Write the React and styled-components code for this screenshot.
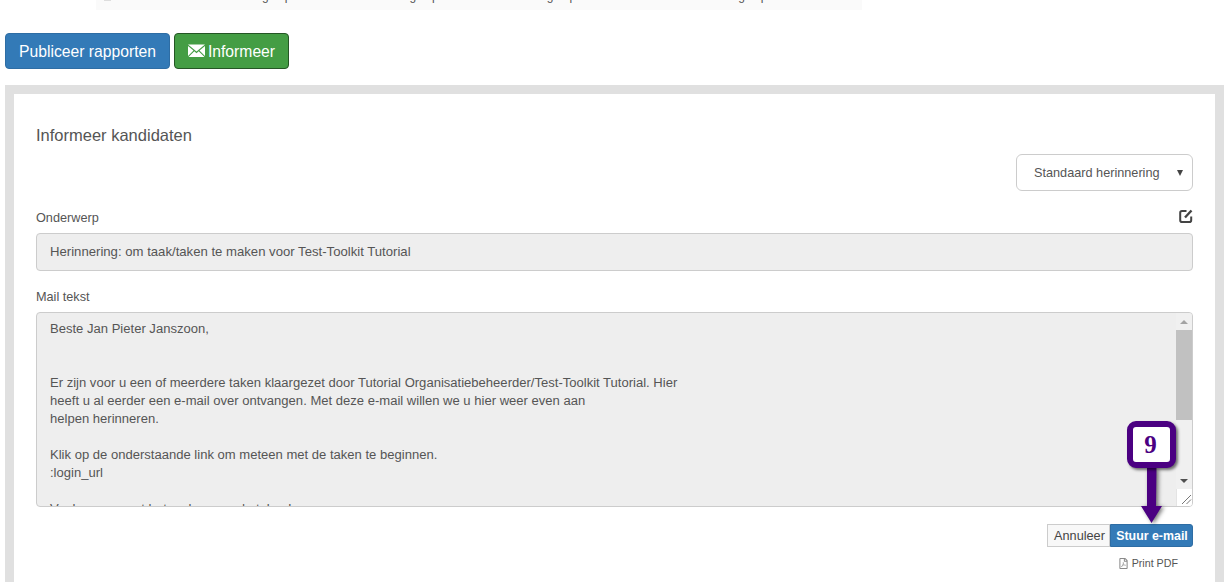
import React from 'react'
import styled, { createGlobalStyle } from 'styled-components'
import { FaRegFilePdf } from 'react-icons/fa'

const Global = createGlobalStyle`
  html, body { margin: 0; padding: 0; background: #fff; }
  body { font-family: "Liberation Sans", Arial, sans-serif; color: #555; }
`

const Page = styled.div`
  position: relative;
  width: 1226px;
  height: 582px;
  overflow: hidden;
  background: #fff;
`
const TopStrip = styled.div`
  display: flex;
  margin-left: 96px;
  width: 766px;
  height: 10px;
  background: #fafafa;
  overflow: hidden;
`
const Cut = styled.span`
  margin-left: ${p => p.$left}px;
  font-size: 12px;
  line-height: 12px;
  height: 12px;
  color: #555;
  transform: translateY(-10px);
`
const Dot = styled.span`
  width: 7px;
  height: 1px;
  margin-left: 8px;
  background: #ddd;
`
const Actions = styled.div`
  display: flex;
  gap: 4px;
  margin: 23px 0 16px 5px;
`
const BigButton = styled.button`
  display: flex;
  align-items: center;
  justify-content: center;
  gap: 3px;
  box-sizing: border-box;
  width: ${p => p.$width}px;
  height: 36px;
  padding: 2px 0 0;
  border: 1px solid ${p => (p.$green ? '#255625' : '#2e6da4')};
  border-radius: 4px;
  background: ${p => (p.$green ? '#449d44' : '#337ab7')};
  color: #fff;
  font: 15.7px "Liberation Sans", Arial, sans-serif;
  svg { margin-top: -4px; }
`
const Panel = styled.section`
  box-sizing: border-box;
  width: 1219px;
  height: 520px;
  margin-left: 5px;
  padding: 32px 22px 0;
  border: 9px solid #e0e0e0;
  background: #fff;
`
const Title = styled.h3`
  margin: 0;
  font-size: 16.5px;
  font-weight: 400;
  line-height: 18px;
  color: #555;
`
const SelectRow = styled.div`
  display: flex;
  justify-content: flex-end;
  margin-top: 10px;
`
const Select = styled.div`
  display: flex;
  align-items: center;
  justify-content: space-between;
  box-sizing: border-box;
  width: 177px;
  height: 37px;
  padding: 0 9px 0 17px;
  border: 1px solid #ccc;
  border-radius: 6px;
  font-size: 12.7px;
  color: #555;
`
const Caret = styled.span`
  width: 0;
  height: 0;
  border-left: 3px solid transparent;
  border-right: 3px solid transparent;
  border-top: 6px solid #444;
`
const LabelRow = styled.div`
  display: flex;
  align-items: center;
  justify-content: space-between;
  box-sizing: border-box;
  height: 18px;
  padding-top: 1px;
  margin-top: ${p => p.$top}px;
  margin-bottom: 7px;
  font-size: 12.7px;
  color: #555;
  svg { display: block; margin-bottom: 3px; }
`
const Field = styled.div`
  display: flex;
  align-items: center;
  box-sizing: border-box;
  height: 38px;
  padding: 0 13px 2px;
  border: 1px solid #ccc;
  border-radius: 4px;
  background: #eee;
  font-size: 13.15px;
  color: #555;
`
const TextBox = styled.div`
  display: flex;
  box-sizing: border-box;
  height: 195px;
  border: 1px solid #ccc;
  border-radius: 4px;
  background: #eee;
  overflow: hidden;
`
const TextBody = styled.div`
  flex: 1;
  padding: 7px 13px 0;
  font-size: 13.05px;
  line-height: 18px;
  color: #555;
  white-space: pre;
  overflow: hidden;
`
const Scrollbar = styled.div`
  display: flex;
  flex-direction: column;
  width: 16px;
  background: #f0f0f0;
`
const Arrow = styled.div`
  display: flex;
  align-items: center;
  justify-content: center;
  height: 17px;
  &::before {
    content: '';
    border-left: 4px solid transparent;
    border-right: 4px solid transparent;
    ${p => (p.$up ? 'border-bottom: 4px solid #a3a3a3;' : 'border-top: 4px solid #505050;')}
  }
`
const Thumb = styled.div`
  height: 90px;
  background: #c1c1c1;
`
const Track = styled.div`
  flex: 1;
`
const Resizer = styled.div`
  display: flex;
  height: 17px;
  background: #fff;
  border-left: 1px solid #e4e4e4;
  svg { display: block; }
`
const Footer = styled.div`
  display: flex;
  justify-content: flex-end;
  margin-top: 17px;
`
const SmallButton = styled.button`
  box-sizing: border-box;
  width: ${p => p.$width}px;
  height: 23px;
  padding: ${p => (p.$primary ? '0 0 0 1px' : '0 0 0 2px')};
  border: 1px solid ${p => (p.$primary ? '#2e6da4' : '#ccc')};
  border-radius: ${p => (p.$primary ? '0 3px 3px 0' : '0')};
  background: ${p => (p.$primary ? '#337ab7' : '#f8f8f8')};
  color: ${p => (p.$primary ? '#fff' : '#444')};
  font: ${p => (p.$primary ? 700 : 400)} ${p => (p.$primary ? 12.4 : 12.7)}px "Liberation Sans", Arial, sans-serif;
`
const PrintRow = styled.div`
  display: flex;
  justify-content: flex-end;
  align-items: center;
  gap: 3px;
  height: 14px;
  margin-top: 9px;
  padding-right: 15px;
  font-size: 10.7px;
  color: #555;
  svg { color: #8a8a8a; }
`
const Badge = styled.div`
  position: absolute;
  left: 1127px;
  top: 421px;
  display: flex;
  align-items: center;
  justify-content: center;
  box-sizing: border-box;
  width: 49px;
  height: 47px;
  padding-right: 2px;
  border: 6px solid #4b0082;
  border-radius: 9px;
  background: #fff;
  box-shadow: 2px 2px 3px rgba(0, 0, 0, 0.55);
  color: #4b0082;
  font: 700 25px "Liberation Serif", "Times New Roman", serif;
`
const Pointer = styled.svg`
  position: absolute;
  left: 1136px;
  top: 468px;
  filter: drop-shadow(2px 1px 2px rgba(0, 0, 0, 0.55));
`

const Envelope = () => (
  <svg width="17" height="13" viewBox="0 0 17 13">
    <path d="M0 0.5h17L8.5 7.5z" fill="#fff" />
    <path d="M0 2v10l5.5-5.5zM17 2v10l-5.5-5.5z" fill="#fff" />
    <path d="M0.5 13L6.3 7.3l2.2 1.9 2.2-1.9 5.800 5.700z" fill="#fff" />
  </svg>
)

const EditIcon = () => (
  <svg width="14" height="14" viewBox="0 0 14 14" fill="none" stroke="#444">
    <path d="M7.500 2H3A1.800 1.800 0 0 0 1.200 3.800v7.400A1.800 1.800 0 0 0 3 13h7.400a1.800 1.800 0 0 0 1.800-1.800V7.500" strokeWidth="2" />
    <path d="M6 8.500L12.500 1.500" strokeWidth="2.400" />
  </svg>
)

const mailText = `Beste Jan Pieter Janszoon,


Er zijn voor u een of meerdere taken klaargezet door Tutorial Organisatiebeheerder/Test-Toolkit Tutorial. Hier
heeft u al eerder een e-mail over ontvangen. Met deze e-mail willen we u hier weer even aan
helpen herinneren.

Klik op de onderstaande link om meteen met de taken te beginnen.
:login_url

Veel succes met het maken van de taken!`

const App = () => {
  return (
    <Page>
      <Global />
      <TopStrip>
        <Dot />
        <Cut $left={151}>g</Cut>
        <Cut $left={16}>p</Cut>
        <Cut $left={118}>g</Cut>
        <Cut $left={16}>p</Cut>
        <Cut $left={108}>g</Cut>
        <Cut $left={16}>p</Cut>
        <Cut $left={162}>g</Cut>
        <Cut $left={16}>p</Cut>
      </TopStrip>
      <Actions>
        <BigButton $width={165}>Publiceer rapporten</BigButton>
        <BigButton $width={115} $green><Envelope />Informeer</BigButton>
      </Actions>
      <Panel>
        <Title>Informeer kandidaten</Title>
        <SelectRow>
          <Select>Standaard herinnering<Caret /></Select>
        </SelectRow>
        <LabelRow $top={17}>
          Onderwerp
          <EditIcon />
        </LabelRow>
        <Field>Herinnering: om taak/taken te maken voor Test-Toolkit Tutorial</Field>
        <LabelRow $top={16}>Mail tekst</LabelRow>
        <TextBox>
          <TextBody>{mailText}</TextBody>
          <Scrollbar>
            <Arrow $up />
            <Thumb />
            <Track />
            <Arrow />
            <Resizer>
              <svg width="15" height="17" viewBox="0 0 15 17">
                <path d="M5 15L14 6M9.500 15L14 10.500" stroke="#777" strokeWidth="1" />
              </svg>
            </Resizer>
          </Scrollbar>
        </TextBox>
        <Footer>
          <SmallButton $width={63}>Annuleer</SmallButton>
          <SmallButton $width={83} $primary>Stuur e-mail</SmallButton>
        </Footer>
        <PrintRow>
          <FaRegFilePdf size={11} />
          Print PDF
        </PrintRow>
      </Panel>
      <Pointer width="30" height="58" viewBox="0 0 30 58">
        <path d="M11 0h9.500l-.5 38h6L15.500 55 5 38h6z" fill="#4b0082" />
      </Pointer>
      <Badge>9</Badge>
    </Page>
  )
}

export default App
